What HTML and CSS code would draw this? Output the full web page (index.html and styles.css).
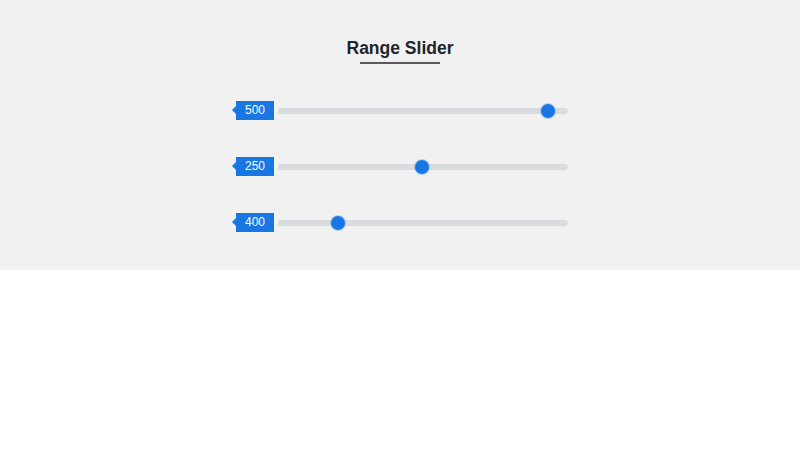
FILE: index.html
```html
<!DOCTYPE html>
<html>
<head>
<meta charset="utf-8">
<link rel="stylesheet" href="styles.css">
</head>
<body>
<section class="panel">
  <h1 class="title">Range Slider</h1>
  <div class="underline"></div>
  <div class="sliders">
    <div class="row">
      <span class="badge">500</span>
      <div class="track"><span class="thumb" style="left:93.1%"></span></div>
    </div>
    <div class="row">
      <span class="badge">250</span>
      <div class="track"><span class="thumb" style="left:49.7%"></span></div>
    </div>
    <div class="row">
      <span class="badge">400</span>
      <div class="track"><span class="thumb" style="left:20.7%"></span></div>
    </div>
  </div>
</section>
</body>
</html>
```
FILE: styles.css
```css
html, body {
  margin: 0;
  padding: 0;
  background: #ffffff;
  font-family: "Liberation Sans", Arial, sans-serif;
}
.panel {
  background: #f1f1f1;
  height: 270px;
  box-sizing: border-box;
  padding-top: 37px;
  display: flex;
  flex-direction: column;
  align-items: center;
}
.title {
  margin: 0;
  font-size: 17.5px;
  line-height: 22px;
  font-weight: bold;
  color: #22252a;
}
.underline {
  width: 80px;
  height: 2px;
  background: #5a5a5a;
  margin-top: 3px;
}
.sliders {
  width: 336px;
  margin-top: 37px;
  display: flex;
  flex-direction: column;
  gap: 37px;
}
.row {
  display: flex;
  align-items: center;
  height: 19px;
  gap: 4px;
}
.badge {
  position: relative;
  margin-left: 4px;
  width: 38px;
  height: 19px;
  background: #1877e2;
  color: #fff;
  font-size: 12px;
  line-height: 19px;
  text-align: center;
}
.badge::before {
  content: "";
  position: absolute;
  left: -4px;
  top: 5px;
  border-top: 4.5px solid transparent;
  border-bottom: 4.5px solid transparent;
  border-right: 4px solid #1877e2;
}
.track {
  position: relative;
  flex: 1;
  height: 6px;
  border-radius: 3px;
  background: #d8dcdf;
}
.thumb {
  position: absolute;
  top: 50%;
  width: 14px;
  height: 14px;
  margin-left: -7px;
  margin-top: -7px;
  border-radius: 50%;
  background: #1877e2;
  box-shadow: 0 0 0 1px rgba(24, 119, 226, 0.25);
}
```
